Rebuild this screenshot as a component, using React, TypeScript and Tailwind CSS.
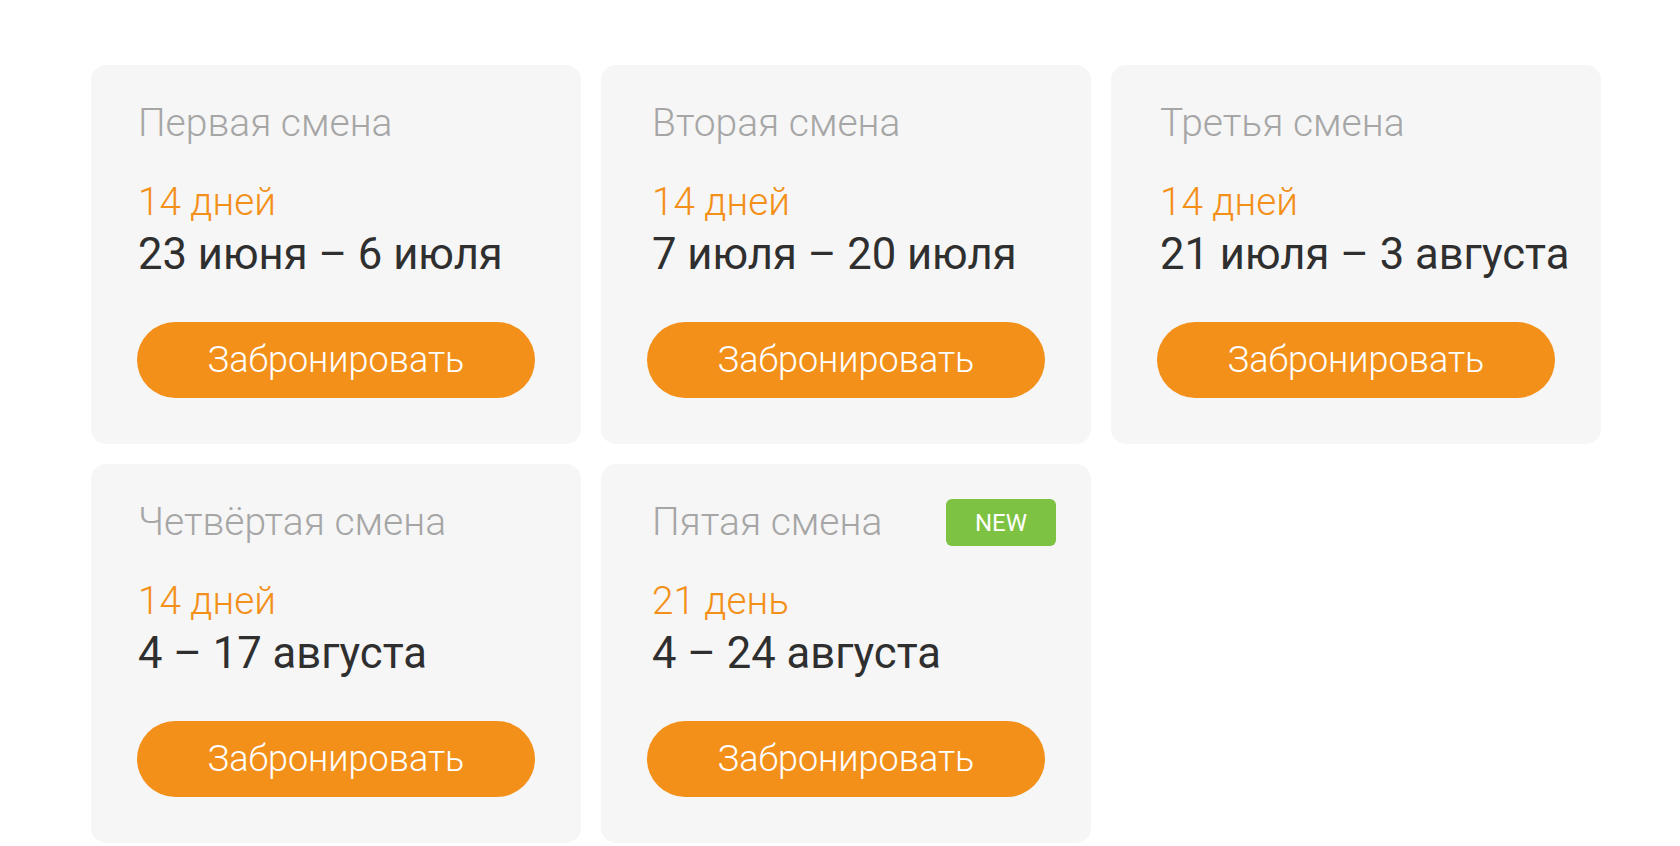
import React from "react";

type Shift = { title: string; days: string; dates: string; isNew?: boolean; col: number };

const shifts: Shift[] = [
  { title: "Первая смена", days: "14 дней", dates: "23 июня – 6 июля", col: 0 },
  { title: "Вторая смена", days: "14 дней", dates: "7 июля – 20 июля", col: 1 },
  { title: "Третья смена", days: "14 дней", dates: "21 июля – 3 августа", col: 2 },
  { title: "Четвёртая смена", days: "14 дней", dates: "4 – 17 августа", col: 0 },
  { title: "Пятая смена", days: "21 день", dates: "4 – 24 августа", isNew: true, col: 1 },
];

const textPad = ["pl-[1px]", "pl-[5px]", "pl-[3px]"];

function Card({ s }: { s: Shift }) {
  return (
    <div className="relative flex flex-col rounded-[15px] bg-[#f6f6f6] pl-[46px] pr-[46px] pt-[36px] pb-[46px]">
      {s.isNew && (
        <div className="absolute right-[35px] top-[35px] flex h-[47px] w-[110px] items-center justify-center rounded-[6px] bg-[#7dc242] text-[24px] font-normal leading-none text-white">
          NEW
        </div>
      )}
      <div className={`flex flex-col ${textPad[s.col]}`}>
        <div className="h-[44px] whitespace-nowrap text-[39px] font-light leading-[44px] text-[#a6a6a6]">{s.title}</div>
        <div className="mt-[35px] h-[44px] whitespace-nowrap text-[38.7px] font-light leading-[44px] text-[#f39019]">{s.days}</div>
        <div className="h-[62px] whitespace-nowrap text-[43.6px] font-normal leading-[62px] text-[#2f2f2f]">{s.dates}</div>
      </div>
      <button className="mt-[36px] flex h-[76px] w-full items-center justify-center rounded-full bg-[#f3901a] text-[36px] font-light leading-[76px] text-white">
        Забронировать
      </button>
    </div>
  );
}

export default function App() {
  return (
    <div
      className="min-h-[846px] w-full bg-white pl-[91px] pt-[65px]"
      style={{ fontFamily: "Roboto, 'Noto Sans', sans-serif" }}
    >
      <div className="grid grid-cols-[repeat(3,490px)] gap-[20px]">
        {shifts.map((s) => (
          <Card key={s.title} s={s} />
        ))}
      </div>
    </div>
  );
}
